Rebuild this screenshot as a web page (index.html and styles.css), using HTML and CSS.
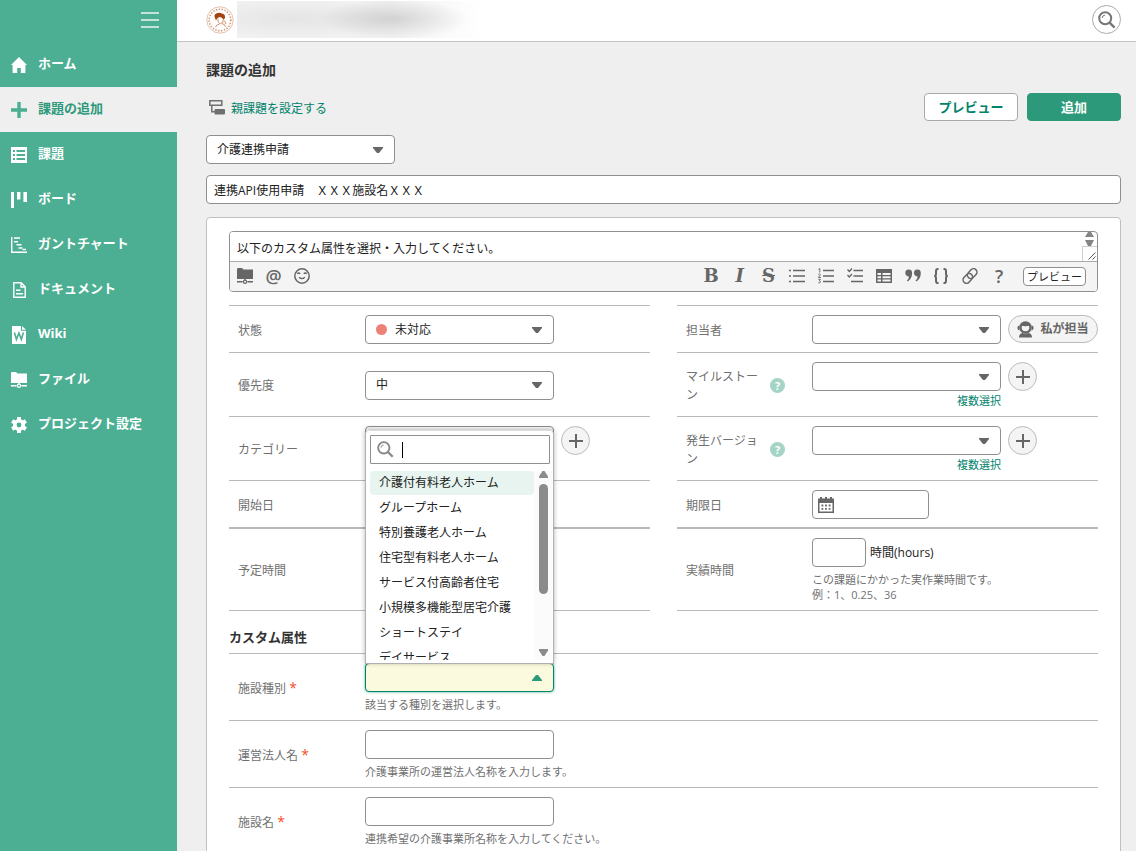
FILE: index.html
```html
<!DOCTYPE html>
<html lang="ja">
<head>
    <meta charset="UTF-8">
    <meta name="viewport" content="width=device-width, initial-scale=1.0">
    <title>課題の追加</title>
    <link rel="stylesheet" href="styles.css">
</head>
<body>

<svg class="sprite" aria-hidden="true">
    <symbol id="icon-search" viewBox="0 0 18 18">
        <circle cx="7.2" cy="7.2" r="6" fill="none" stroke="currentColor" stroke-width="2"/>
        <path d="M4.2 7a3 3 0 0 1 2.8-2.9" fill="none" stroke="currentColor" stroke-width="1"/>
        <path d="M11.6 11.6l5 5" stroke="currentColor" stroke-width="2.4"/>
    </symbol>
    <symbol id="icon-plus" viewBox="0 0 16 16">
        <path d="M8 1v14M1 8h14" stroke="currentColor" stroke-width="2"/>
    </symbol>
    <symbol id="icon-folder" viewBox="0 0 16 16">
        <path d="M0 1.2Q0 0 1.2 0H5l1.5 1.6H16V11H0z" fill="currentColor"/>
        <path d="M8 11v1M0 13.8h5.6M10.4 13.8H16" stroke="currentColor" stroke-width="1.4"/>
        <circle cx="8" cy="13.7" r="1.6" fill="none" stroke="currentColor" stroke-width="1.2"/>
    </symbol>
</svg>

<div class="app">
    <!-- サイドメニュー -->
    <nav class="sidebar">
        <button type="button" class="menu-toggle" aria-label="メニュー">
            <svg width="18" height="16" viewBox="0 0 18 16"><path d="M0 1h18M0 8h18M0 15h18" stroke="currentColor" stroke-width="2"/></svg>
        </button>
        <a href="#" class="nav-item">
            <svg viewBox="0 0 16 16"><path d="M8 0L0 8h1.600v8h4.600v-5h3.600v5h4.600V8H16z" fill="currentColor"/></svg>
            <span>ホーム</span>
        </a>
        <a href="#" class="nav-item active">
            <svg viewBox="0 0 16 16"><path d="M8 0v16M0 8h16" stroke="currentColor" stroke-width="3.4"/></svg>
            <span>課題の追加</span>
        </a>
        <a href="#" class="nav-item">
            <svg viewBox="0 0 16 16"><path fill-rule="evenodd" d="M0 0h16v16H0zM2 3v2h2V3zM5.5 3v2H14V3zM2 7v2h2V7zM5.5 7v2H14V7zM2 11v2h2v-2zM5.5 11v2H14v-2z" fill="currentColor"/></svg>
            <span>課題</span>
        </a>
        <a href="#" class="nav-item">
            <svg viewBox="0 0 16 16"><path d="M0 0h3v16H0zM6 0h3.4v7.5H6zM12.4 0H16v10h-3.6z" fill="currentColor"/></svg>
            <span>ボード</span>
        </a>
        <a href="#" class="nav-item">
            <svg viewBox="0 0 16 16"><path d="M.7 0v15.3H16M3 1h6M3 4.8h4M5.5 7.8h5M7.5 11h4M11.5 12.6H15" fill="none" stroke="currentColor" stroke-width="1.5"/></svg>
            <span>ガントチャート</span>
        </a>
        <a href="#" class="nav-item">
            <svg viewBox="0 0 16 16"><path d="M2.8.8h7.4l4 4v10.4H2.8zM10 .8V5h4.2M5 8.3h4.5M5 11.8h7" fill="none" stroke="currentColor" stroke-width="1.4"/></svg>
            <span>ドキュメント</span>
        </a>
        <a href="#" class="nav-item">
            <svg viewBox="0 0 16 18"><path d="M1 0h9v4.8h5V18H1zM11 0l4 3.8h-4z" fill="currentColor"/><path d="M3.4 6.5l2 6.8 2.5-6.2 2.5 6.2 2-6.8" fill="none" stroke="#4caf93" stroke-width="1.6"/></svg>
            <span>Wiki</span>
        </a>
        <a href="#" class="nav-item">
            <svg viewBox="0 0 16 16"><use href="#icon-folder"/></svg>
            <span>ファイル</span>
        </a>
        <a href="#" class="nav-item">
            <svg viewBox="0 0 16 16"><circle cx="8" cy="8" r="4.2" fill="none" stroke="currentColor" stroke-width="3.6"/><path d="M8 0v3M8 13v3M1.1 4l2.6 1.5M12.3 10.5l2.6 1.5M1.1 12l2.6-1.5M12.3 5.5L14.9 4" stroke="currentColor" stroke-width="4"/></svg>
            <span>プロジェクト設定</span>
        </a>
    </nav>

    <header class="topbar">
        <svg class="project-logo" viewBox="0 0 28 28">
            <circle cx="14" cy="14" r="13.2" fill="#fffdfb" stroke="#dcb39d" stroke-width=".8"/>
            <circle cx="14" cy="14" r="10.8" fill="none" stroke="#cf9a7c" stroke-width="1.6" stroke-dasharray="1.4 1.5"/>
            <path d="M9 12q-1.5-3 1.200-4.400Q13 5.700 16 7.600q3.400.6 3 4.200-.6 1.600-1.600 1.800-1.600-3-4-2.600-2.600.6-3.400 3.400z" fill="#a3430f"/>
            <path d="M12 12.500q-.4 5 2.600 5.200 2.800-.4 2.800-4.400M13.500 18q-3.500.8-4 3.200M16 17.600q3 .4 3.600 3.200M18.600 14.500l1.200 3.500" fill="none" stroke="#c47a52" stroke-width=".8"/>
        </svg>
        <div class="project-name"></div>
        <button type="button" class="round-button search-button" aria-label="検索">
            <svg width="18" height="18"><use href="#icon-search"/></svg>
        </button>
    </header>

    <main class="content">
        <h1>課題の追加</h1>

        <div class="action-row">
            <a href="#" class="parent-link">
                <svg width="16" height="15" viewBox="0 0 16 15"><path d="M.8.8h12v4.400H.8zM2.800 5.200v6.600H6" fill="none" stroke="#707070" stroke-width="1.5"/><rect x="5.5" y="9" width="10.5" height="5.5" rx="1" fill="#707070"/></svg>
                <span>親課題を設定する</span>
            </a>
            <div class="actions">
                <button type="button" class="button">プレビュー</button>
                <button type="submit" class="button primary" form="issueForm">追加</button>
            </div>
        </div>

        <form id="issueForm">
            <select class="control select type-select" aria-label="種別">
                <option>介護連携申請</option>
            </select>
            <input type="text" class="control subject" aria-label="件名" value="連携API使用申請　ＸＸＸ施設名ＸＸＸ">

            <div class="panel">
                <!-- 詳細 -->
                <div class="editor">
                    <div class="editor-text">
                        <textarea rows="1" aria-label="詳細">以下のカスタム属性を選択・入力してください。</textarea>
                        <svg width="15" height="29" viewBox="0 0 15 29">
                            <path d="M3 5l3-5h3l3 5zM3 8h9l-3 6H6z" fill="#858585"/>
                            <path d="M.5 29V14.500H15" fill="none" stroke="#d0d0d0"/>
                            <path d="M6.500 27.500l7-7M10.500 27.500l3-3" stroke="#555"/>
                        </svg>
                    </div>
                    <div class="toolbar">
                        <div class="tools insert-tools">
                            <button type="button" aria-label="ファイル"><svg viewBox="0 0 16 16"><use href="#icon-folder"/></svg></button>
                            <button type="button" class="at">@</button>
                            <button type="button" aria-label="絵文字"><svg viewBox="0 0 16 16"><g fill="none" stroke="currentColor" stroke-width="1.5"><circle cx="8" cy="8" r="7.2"/><path d="M3.200 5.800q1.500-1.800 3 0M9.800 5.800q1.500-1.800 3 0M5.200 9.200q2.800 2.800 5.600 0"/></g></svg></button>
                        </div>
                        <div class="tools format-tools">
                            <button type="button" class="bold">B</button>
                            <button type="button" class="italic">I</button>
                            <button type="button" class="strike">S</button>
                            <button type="button" aria-label="箇条書き"><svg viewBox="0 0 16 16"><path d="M0 2.500h2M0 8h2M0 13.500h2M4 2.500h12M4 8h12M4 13.500h12" stroke="currentColor" stroke-width="1.3"/></svg></button>
                            <button type="button" aria-label="番号付きリスト"><svg viewBox="0 0 16 16"><path d="M5 2.500h11M5 8h11M5 13.500h11" stroke="currentColor" stroke-width="1.3"/><path d="M.4 1.400L1.800.5v4M.3 6.300q1.400-1 2.200.2L.4 9.500h2.500M.3 11.300h2.200l-1.200 1.500q1.700.2 1 1.600-.8 1-2.100.2" fill="none" stroke="currentColor" stroke-width=".9"/></svg></button>
                            <button type="button" aria-label="チェックリスト"><svg viewBox="0 0 16 16"><path d="M6.500 2.500H16M6.500 8H16M4 13.500h12M.5 1.500l1.800 2L5 .5M.5 7l1.800 2L5 6" fill="none" stroke="currentColor" stroke-width="1.3"/></svg></button>
                            <button type="button" aria-label="表"><svg viewBox="0 0 16 16"><path fill-rule="evenodd" d="M0 1h16v14H0zM1.500 5v2H5V5zM6.500 5v2h8V5zM1.500 8.300v2H5v-2zM6.500 8.300v2h8v-2zM1.500 11.600v2H5v-2zM6.500 11.600v2h8v-2z" fill="currentColor"/></svg></button>
                            <button type="button" aria-label="引用"><svg viewBox="0 0 16 16"><path d="M.3 5a3.400 3.400 0 0 1 6.800 0q0 5.500-4.300 8.500l-1-1Q4 10.500 4 8.400A3.400 3.400 0 0 1 .3 5zM9 5a3.400 3.400 0 0 1 6.800 0q0 5.500-4.300 8.500l-1-1q2.200-2 2.200-4.100A3.400 3.400 0 0 1 9 5z" fill="currentColor"/></svg></button>
                            <button type="button" aria-label="コード"><svg viewBox="0 0 16 16"><path d="M5.500 1Q3 .8 3 3v3q0 2-1.800 2Q3 8 3 10v3q0 2.200 2.500 2M10.500 1Q13 .8 13 3v3q0 2 1.800 2Q13 8 13 10v3q0 2.200-2.500 2" fill="none" stroke="currentColor" stroke-width="2"/></svg></button>
                            <button type="button" aria-label="リンク"><svg viewBox="0 0 16 16"><g fill="none" stroke="currentColor" stroke-width="1.5"><rect x="-5.4" y="-3.4" width="10.8" height="6.8" rx="3.4" transform="translate(10.200 5.600) rotate(-48)"/><rect x="-5.4" y="-3.4" width="10.8" height="6.8" rx="3.4" transform="translate(5.800 10.400) rotate(-48)"/></g></svg></button>
                            <button type="button" class="help-tool">?</button>
                        </div>
                        <button type="button" class="preview-small">プレビュー</button>
                    </div>
                </div>

                <!-- 基本属性 -->
                <div class="field-grid">
                    <div class="field">
                        <label for="status">状態</label>
                        <div class="status-select">
                            <select id="status" class="control select"><option>未対応</option></select>
                            <span class="status-dot"></span>
                        </div>
                    </div>
                    <div class="field">
                        <label for="assignee">担当者</label>
                        <div class="inline">
                            <select id="assignee" class="control select"><option></option></select>
                            <button type="button" class="assign-me">
                                <svg width="17" height="17" viewBox="0 0 17 17"><circle cx="8.500" cy="6.500" r="5" fill="none" stroke="currentColor" stroke-width="2.4"/><path d="M4 4.500Q8.500 6 13 4.500L12 2H5zM.5 6q0-1.500 2-1.500v5Q.5 9 .5 7.500zM16.500 6q0-1.500-2-1.500v5q2-.5 2-2zM2 16.500q0-4 3.500-4.500 3 1.500 6 0 3.500.5 3.500 4.500z" fill="currentColor"/></svg>
                                私が担当
                            </button>
                        </div>
                    </div>

                    <div class="field">
                        <label for="priority">優先度</label>
                        <select id="priority" class="control select"><option>中</option></select>
                    </div>
                    <div class="field">
                        <div class="label-help">
                            <label for="milestone">マイルストーン</label>
                            <button type="button" class="help">?</button>
                        </div>
                        <div class="inline">
                            <div class="multi">
                                <select id="milestone" class="control select"><option></option></select>
                                <a href="#">複数選択</a>
                            </div>
                            <button type="button" class="round-button" aria-label="マイルストーンを追加"><svg width="16" height="16"><use href="#icon-plus"/></svg></button>
                        </div>
                    </div>

                    <div class="field">
                        <label for="category">カテゴリー</label>
                        <div class="inline">
                            <select id="category" class="control select"><option></option></select>
                            <button type="button" class="round-button" aria-label="カテゴリーを追加"><svg width="16" height="16"><use href="#icon-plus"/></svg></button>
                        </div>
                    </div>
                    <div class="field">
                        <div class="label-help">
                            <label for="version">発生バージョン</label>
                            <button type="button" class="help">?</button>
                        </div>
                        <div class="inline">
                            <div class="multi">
                                <select id="version" class="control select"><option></option></select>
                                <a href="#">複数選択</a>
                            </div>
                            <button type="button" class="round-button" aria-label="発生バージョンを追加"><svg width="16" height="16"><use href="#icon-plus"/></svg></button>
                        </div>
                    </div>

                    <div class="field">
                        <label for="startDate">開始日</label>
                        <input type="text" id="startDate" class="control date">
                    </div>
                    <div class="field">
                        <label for="dueDate">期限日</label>
                        <div class="control date">
                            <svg width="16" height="16" viewBox="0 0 16 16"><path fill-rule="evenodd" d="M0 1.500h2V0h2v1.500h3V0h2v1.500h3V0h2v1.500h2V16H0zM1.500 6v8.500h13V6z" fill="#666"/><path d="M3.500 8.500h9M3.500 11.800h9" stroke="#666" stroke-width="1.8" stroke-dasharray="1.8"/></svg>
                            <input type="text" id="dueDate">
                        </div>
                    </div>

                    <div class="field thick">
                        <label for="estimated">予定時間</label>
                        <input type="text" id="estimated" class="control hours">
                    </div>
                    <div class="field thick">
                        <label for="actual">実績時間</label>
                        <div>
                            <div class="hours-row">
                                <input type="text" id="actual" class="control hours">
                                <span>時間(hours)</span>
                            </div>
                            <p class="hint">この課題にかかった実作業時間です。<br>例：1、0.25、36</p>
                        </div>
                    </div>
                    <div class="grid-end"></div>
                    <div class="grid-end"></div>
                </div>

                <!-- カスタム属性 -->
                <h2>カスタム属性</h2>
                <div class="field">
                    <label for="facilityType">施設種別 <span class="required">*</span></label>
                    <div>
                        <div class="combo">
                            <select id="facilityType" class="control select opened"><option></option></select>
                            <div class="dropdown">
                                <div class="dropdown-search">
                                    <svg width="17" height="17"><use href="#icon-search"/></svg>
                                    <span class="caret"></span>
                                    <input type="text" aria-label="施設種別を検索">
                                </div>
                                <div class="dropdown-body">
                                    <ul>
                                        <li class="highlighted">介護付有料老人ホーム</li>
                                        <li>グループホーム</li>
                                        <li>特別養護老人ホーム</li>
                                        <li>住宅型有料老人ホーム</li>
                                        <li>サービス付高齢者住宅</li>
                                        <li>小規模多機能型居宅介護</li>
                                        <li>ショートステイ</li>
                                        <li>デイサービス</li>
                                    </ul>
                                    <div class="scrollbar">
                                        <svg width="9" height="7" viewBox="0 0 9 7"><path d="M3.500 0h2L9 5.500V7H0V5.500z" fill="#8b8b8b"/></svg>
                                        <span class="thumb"></span>
                                        <svg width="9" height="7" viewBox="0 0 9 7"><path d="M0 0h9v1.500L5.500 7h-2L0 1.500z" fill="#8b8b8b"/></svg>
                                    </div>
                                </div>
                            </div>
                        </div>
                        <p class="hint">該当する種別を選択します。</p>
                    </div>
                </div>
                <div class="field">
                    <label for="corporation">運営法人名 <span class="required">*</span></label>
                    <div>
                        <input type="text" id="corporation" class="control">
                        <p class="hint">介護事業所の運営法人名称を入力します。</p>
                    </div>
                </div>
                <div class="field">
                    <label for="facility">施設名 <span class="required">*</span></label>
                    <div>
                        <input type="text" id="facility" class="control">
                        <p class="hint">連携希望の介護事業所名称を入力してください。</p>
                    </div>
                </div>
            </div>
        </form>
    </main>
</div>

</body>
</html>
```
FILE: styles.css
```css
* {
    margin: 0;
    padding: 0;
    box-sizing: border-box;
}

body {
    font-family: "Open Sans", "Noto Sans CJK JP", sans-serif;
    font-size: 12px;
    line-height: 18px;
    color: #222;
    background-color: #efefef;
}

button, input, select, textarea {
    font: inherit;
    color: inherit;
}

button {
    cursor: pointer;
}

a {
    color: #00836b;
    text-decoration: none;
}

svg {
    display: block;
    flex-shrink: 0;
}

.sprite {
    display: none;
}

.app {
    display: grid;
    grid-template-columns: 177px 1fr;
    grid-template-rows: 42px 1fr;
    height: 100vh;
}

/* サイドメニュー */
.sidebar {
    grid-row: 1 / 3;
    background-color: #4caf93;
    display: flex;
    flex-direction: column;
}

.menu-toggle {
    height: 42px;
    padding: 0 18px 2px;
    display: flex;
    justify-content: flex-end;
    align-items: center;
    background: none;
    border: none;
    color: #c4e4da;
}

.nav-item {
    display: flex;
    align-items: center;
    gap: 11px;
    height: 45px;
    padding-left: 11px;
    color: #fff;
    font-size: 13px;
    font-weight: bold;
}

.nav-item svg {
    width: 16px;
    height: 18px;
}

.nav-item span {
    padding-bottom: 4px;
}

.nav-item.active {
    background-color: #efefef;
    color: #2c9a7a;
}

.nav-item.active svg {
    color: #4caf93;
}

/* ヘッダー */
.topbar {
    display: flex;
    align-items: center;
    padding: 0 15px 2px 29px;
    background-color: #fff;
    border-bottom: 1px solid #c4c4c4;
}

.project-logo {
    width: 28px;
    height: 28px;
}

.project-name {
    width: 250px;
    height: 37px;
    margin-left: 3px;
    background:
        radial-gradient(ellipse 75px 20px at 63% 48%, rgba(0, 0, 0, 0.13), transparent),
        radial-gradient(ellipse 110px 20px at 22% 48%, rgba(0, 0, 0, 0.05), transparent),
        linear-gradient(to right, #f1f1f1, #f1f1f1 60%, #fff 98%);
}

.round-button {
    width: 29px;
    height: 29px;
    flex-shrink: 0;
    display: flex;
    justify-content: center;
    align-items: center;
    background-color: #f4f4f4;
    border: 1px solid #bbb;
    border-radius: 50%;
    color: #666;
}

.search-button {
    margin-left: auto;
    background-color: #fff;
    border-color: #aaa;
    color: #777;
}

/* 本文 */
.content {
    padding: 18px 15px 0 29px;
    overflow-y: auto;
    scrollbar-width: none;
}

h1 {
    margin-bottom: 13px;
    font-size: 14px;
    line-height: 20px;
    color: #333;
}

.action-row {
    display: flex;
    justify-content: space-between;
    align-items: center;
    margin-bottom: 14px;
}

.parent-link {
    display: flex;
    align-items: center;
    gap: 6px;
    padding-left: 3px;
}

.parent-link span {
    padding-top: 3px;
}

.actions {
    display: flex;
    gap: 9px;
}

.button {
    width: 94px;
    height: 28px;
    background-color: #fff;
    border: 1px solid #aaa;
    border-radius: 4px;
    color: #00836b;
    font-size: 13px;
    font-weight: bold;
}

.button.primary {
    background-color: #2c9a7a;
    border-color: #2c9a7a;
    color: #fff;
}

.control {
    display: block;
    width: 189px;
    height: 29px;
    padding: 0 7px;
    background-color: #fff;
    border: 1px solid #8f8f8f;
    border-radius: 4px;
    outline: none;
}

.select {
    appearance: none;
    padding: 0 30px 0 10px;
    background-image: url("data:image/svg+xml,%3Csvg xmlns='http://www.w3.org/2000/svg' width='10' height='6'%3E%3Cpath d='M0 0h10v1L6 6H4L0 1z' fill='%23666'/%3E%3C/svg%3E");
    background-repeat: no-repeat;
    background-position: right 11px center;
}

.type-select {
    margin-bottom: 11px;
}

.subject {
    width: 100%;
    margin-bottom: 13px;
}

.panel {
    padding: 13px 22px;
    background-color: #fff;
    border: 1px solid #c0c0c0;
    border-radius: 4px;
}

/* エディタ */
.editor {
    margin-bottom: 13px;
    border: 1px solid #8f8f8f;
    border-radius: 4px;
    overflow: hidden;
}

.editor-text {
    display: flex;
    height: 29px;
}

.editor-text textarea {
    flex: 1;
    padding: 8px 7px 0;
    border: none;
    outline: none;
    resize: none;
    overflow: hidden;
}

.toolbar {
    display: flex;
    align-items: center;
    height: 30px;
    padding: 0 11px 1px 5px;
    background-color: #f4f4f4;
    border-top: 1px solid #aaa;
}

.tools {
    display: flex;
    justify-content: space-between;
    align-items: center;
}

.insert-tools {
    width: 77px;
}

.format-tools {
    width: 308px;
    margin-left: auto;
    margin-right: 14px;
}

.tools button {
    width: 20px;
    height: 20px;
    padding: 0 2px;
    background: none;
    border: none;
    color: #666;
    font-size: 18px;
    line-height: 20px;
    text-align: center;
}

.tools svg {
    width: 16px;
    height: 16px;
}

.tools .at {
    padding: 0;
    font-weight: 600;
    line-height: 16px;
}

.tools .bold,
.tools .italic,
.tools .strike {
    font-family: "DejaVu Serif", serif;
    font-weight: bold;
}

.tools .italic {
    font-style: italic;
}

.tools .strike {
    text-decoration: line-through;
}

.tools .help-tool {
    font-weight: 600;
}

.preview-small {
    width: 63px;
    height: 19px;
    background-color: #fff;
    border: 1px solid #8f8f8f;
    border-radius: 4px;
    font-size: 11px;
    line-height: 17px;
}

/* 属性 */
.field-grid {
    display: grid;
    grid-template-columns: 1fr 1fr;
    column-gap: 27px;
}

.field {
    display: grid;
    grid-template-columns: 136px 1fr;
    align-items: center;
    padding: 9px 0 8px;
    border-top: 1px solid #b9b9b9;
}

.field-grid .field:nth-child(even) {
    grid-template-columns: 135px 1fr;
}

.field.thick {
    border-top-width: 2px;
}

.field label {
    padding: 2px 0 0 9px;
    color: #707070;
}

.grid-end {
    border-top: 1px solid #b9b9b9;
}

.inline {
    display: flex;
    align-items: flex-start;
    align-self: start;
    gap: 7px;
}

.status-select {
    display: grid;
    align-items: center;
    justify-items: start;
}

.status-select select,
.status-dot {
    grid-area: 1 / 1;
}

.status-select select {
    padding-left: 29px;
}

.status-dot {
    width: 11px;
    height: 11px;
    margin-left: 11px;
    border-radius: 50%;
    background-color: #ed8077;
}

.assign-me {
    display: flex;
    align-items: center;
    justify-content: center;
    gap: 6px;
    width: 90px;
    height: 28px;
    background-color: #f4f4f4;
    border: 1px solid #bbb;
    border-radius: 14px;
    color: #666;
    font-weight: bold;
    white-space: nowrap;
}

.label-help {
    display: flex;
    align-items: center;
    justify-content: space-between;
    padding-right: 27px;
}

.label-help label {
    width: 83px;
}

.help {
    width: 15px;
    height: 15px;
    background-color: #a3d4c5;
    border: none;
    border-radius: 50%;
    color: #fff;
    font-size: 11px;
    font-weight: bold;
    line-height: 15px;
}

.multi a {
    display: block;
    padding-top: 2px;
    font-size: 11px;
    line-height: 15px;
    text-align: right;
}

.date {
    display: flex;
    align-items: center;
    width: 117px;
    padding: 0 5px;
}

.date input {
    width: 100%;
    border: none;
    outline: none;
}

.hours-row {
    display: flex;
    align-items: center;
    gap: 4px;
}

.hours {
    width: 54px;
}

.hint {
    margin-top: 5px;
    font-size: 11px;
    line-height: 15px;
    color: #707070;
}

.required {
    color: #f0502d;
    font-size: 14px;
    line-height: 16px;
}

h2 {
    padding: 17px 0 7px;
    font-size: 13px;
    line-height: 18px;
    color: #333;
}

/* 施設種別のドロップダウン */
.combo {
    position: relative;
    width: 189px;
}

.opened {
    background-color: #fbf9de;
    background-image: url("data:image/svg+xml,%3Csvg xmlns='http://www.w3.org/2000/svg' width='10' height='6'%3E%3Cpath d='M0 6h10V5L6 0H4L0 5z' fill='%232c9a7a'/%3E%3C/svg%3E");
    border-color: #00836b;
    box-shadow: 0 0 3px #4caf93;
}

.dropdown {
    position: absolute;
    left: 0;
    right: 0;
    bottom: 28px;
    padding: 4px 1px 3px 4px;
    background-color: #fff;
    border: 1px solid #b0b0b0;
    border-top-color: #ddd;
    border-radius: 4px 4px 0 0;
    box-shadow: 0 -1px 5px rgba(0, 0, 0, 0.3);
}

.dropdown-search {
    display: flex;
    align-items: center;
    height: 29px;
    margin-right: 2px;
    padding-left: 6px;
    border: 1px solid #8f8f8f;
    border-radius: 1px;
    color: #888;
}

.dropdown-search input {
    width: 100%;
    height: 25px;
    border: none;
    outline: none;
}

.caret {
    flex-shrink: 0;
    width: 1px;
    height: 16px;
    margin-left: 8px;
    background-color: #000;
}

.dropdown-body {
    display: flex;
    height: 196px;
    padding-top: 7px;
}

.dropdown-body ul {
    flex: 1;
    overflow: hidden;
    list-style: none;
}

.dropdown-body li {
    height: 24px;
    margin-bottom: 1px;
    padding-left: 9px;
    border-radius: 4px;
    line-height: 24px;
    white-space: nowrap;
}

.dropdown-body .highlighted {
    background-color: #e7f4ef;
}

.scrollbar {
    display: flex;
    flex-direction: column;
    align-items: center;
    width: 18px;
    padding-bottom: 4px;
    background-color: #fbfbfb;
}

.thumb {
    width: 9px;
    height: 110px;
    margin: 6px 0 auto;
    border-radius: 5px;
    background-color: #8b8b8b;
}
```
